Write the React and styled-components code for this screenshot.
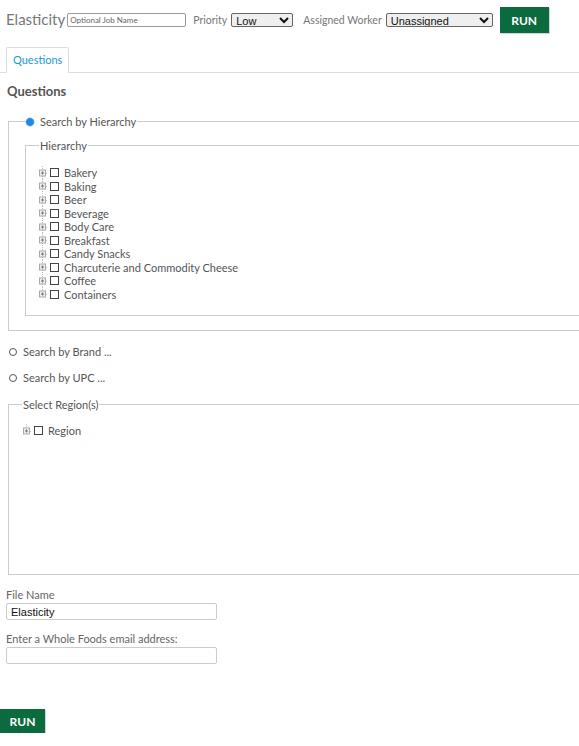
import styled, { createGlobalStyle } from "styled-components"

const Global = createGlobalStyle`
body{
  margin:0;
  overflow:hidden;
  background:#fff;
  font-family:Lato,"Open Sans",sans-serif;
  color:#555;
}
`;

const Page = styled.div`
width:620px;
`;

const Header = styled.div`
display:flex;
align-items:center;
height:40px;
padding:0 0 0 6px;
`;

const AppTitle = styled.span`
font-size:15px;
color:#777;
margin-right:2px;
margin-top:-2px;
`;

const JobInput = styled.input`
width:113px;
height:10px;
padding:1px 2px;
border:1px solid #999;
border-radius:2px;
font-family:Lato,sans-serif;
font-size:8px;
margin-right:7px;
&::placeholder{color:#666;}
`;

const Label = styled.span`
font-size:10.5px;
color:#777;
margin-right:4px;
`;

const Select = styled.select`
width:${p => p.$w}px;
height:14px;
padding:0;
border:1px solid #666;
border-radius:2px;
font-family:"Liberation Sans",Arial,sans-serif;
font-size:11px;
color:#111;
margin-right:10px;
`;

const RunButton = styled.button`
background:#0b6b3f;
color:#fff;
border:none;
font-family:Lato,sans-serif;
font-weight:700;
font-size:12px;
width:${p => p.$w}px;
height:${p => p.$h}px;
padding:0;
margin-left:${p => p.$ml || 0}px;
margin-top:${p => p.$mt || 0}px;
box-shadow:1px 1px 0 #c9dcd1;
`;

const TabBar = styled.div`
display:flex;
padding:7px 0 0 6px;
border-bottom:1px solid #ddd;
`;

const Tab = styled.div`
font-size:11px;
color:#1c9ad6;
padding:5px 6px 6px 6px;
border:1px solid #ddd;
border-bottom:1px solid #fff;
margin-bottom:-1px;
border-radius:2px 2px 0 0;
background:#fff;
`;

const SectionTitle = styled.h2`
margin:10px 0 16px 7px;
font-size:13px;
font-weight:700;
color:#555;
`;

const Fieldset = styled.fieldset`
margin:${p => p.$mt || 0}px 0 0 ${p => p.$ml}px;
padding:${p => p.$pad};
border:1px solid #ccc;
border-width:1px 0 1px 1px;
height:${p => p.$h}px;
box-sizing:border-box;
min-width:0;
`;

const Legend = styled.legend`
font-size:11px;
color:#555;
padding:0 1px;
margin-left:${p => p.$ml || 0}px;
display:flex;
align-items:center;
`;

const RadioDot = styled.span`
display:inline-block;
width:6px;
height:6px;
border-radius:50%;
border:1px solid ${p => p.$on ? "#1e88e5" : "#555"};
background:${p => p.$on ? "#1e88e5" : "#fff"};
box-shadow:${p => p.$on ? "0 0 0 1px #cfe3f7" : "none"};
margin-right:6px;
`;

const Tree = styled.ul`
list-style:none;
margin:0;
padding:0;
`;

const Node = styled.li`
display:flex;
align-items:center;
height:13.5px;
font-size:11px;
color:#555;
`;

const Check = styled.span`
display:inline-block;
width:7px;
height:7px;
border:1px solid #444;
margin:0 5px 0 2px;
`;

const RadioRow = styled.div`
display:flex;
align-items:center;
font-size:11px;
color:#555;
margin-top:${p => p.$mt}px;
padding-left:9px;
`;

const Field = styled.div`
padding-left:6px;
margin-top:${p => p.$mt}px;
`;

const FieldLabel = styled.div`
font-size:11px;
color:#666;
line-height:12px;
`;

const TextInput = styled.input`
display:block;
width:211px;
height:17px;
box-sizing:border-box;
border:1px solid #ccc;
border-radius:2px;
padding:0 4px;
font-family:"Liberation Sans",Arial,sans-serif;
font-size:11px;
color:#111;
margin-top:2px;
`;

const Expander = ({ last }) => (
  <svg width="10" height="14" viewBox="0 0 10 14" style={{ flex: "none" }}>
    <line x1="4.5" y1="0" x2="4.5" y2={last ? 7 : 14} stroke="#bbb" strokeDasharray="1 1" />
    <line x1="8" y1="7.5" x2="10" y2="7.5" stroke="#bbb" strokeDasharray="1 1" />
    <rect x="1.5" y="4" width="6" height="6" fill="#eee" stroke="#aaa" />
    <line x1="3" y1="7" x2="6" y2="7" stroke="#777" />
    <line x1="4.5" y1="5.5" x2="4.5" y2="8.5" stroke="#777" />
  </svg>
);

const categories = [
  "Bakery", "Baking", "Beer", "Beverage", "Body Care", "Breakfast",
  "Candy Snacks", "Charcuterie and Commodity Cheese", "Coffee", "Containers",
];

const App = () => {
  return (
    <Page>
      <Global />
      <Header>
        <AppTitle>Elasticity</AppTitle>
        <JobInput placeholder="Optional Job Name" />
        <Label>Priority</Label>
        <Select $w={62}><option>Low</option></Select>
        <Label>Assigned Worker</Label>
        <Select $w={107}><option>Unassigned</option></Select>
        <RunButton $w={49} $h={26} $ml={-3}>RUN</RunButton>
      </Header>
      <TabBar>
        <Tab>Questions</Tab>
      </TabBar>
      <SectionTitle>Questions</SectionTitle>
      <Fieldset $ml={8} $h={216} $pad="11px 0 0 16px">
        <Legend $ml={0}><RadioDot $on />Search by Hierarchy</Legend>
        <Fieldset $ml={0} $h={177} $pad="14px 0 0 12px">
          <Legend $ml={1}>Hierarchy</Legend>
          <Tree>
            {categories.map((c, i) => (
              <Node key={c}>
                <Expander last={i === categories.length - 1} />
                <Check />
                {c}
              </Node>
            ))}
          </Tree>
        </Fieldset>
      </Fieldset>
      <RadioRow $mt={14}><RadioDot />Search by Brand ...</RadioRow>
      <RadioRow $mt={13}><RadioDot />Search by UPC ...</RadioRow>
      <Fieldset $ml={8} $mt={14} $h={177} $pad="13px 0 0 13px">
        <Legend $ml={0}>Select Region(s)</Legend>
        <Tree>
          <Node>
            <Expander last />
            <Check />
            Region
          </Node>
        </Tree>
      </Fieldset>
      <Field $mt={14}>
        <FieldLabel>File Name</FieldLabel>
        <TextInput defaultValue="Elasticity" />
      </Field>
      <Field $mt={13}>
        <FieldLabel>Enter a Whole Foods email address:</FieldLabel>
        <TextInput />
      </Field>
      <RunButton $w={45} $h={24} $mt={45}>RUN</RunButton>
    </Page>
  )
}

export default App
